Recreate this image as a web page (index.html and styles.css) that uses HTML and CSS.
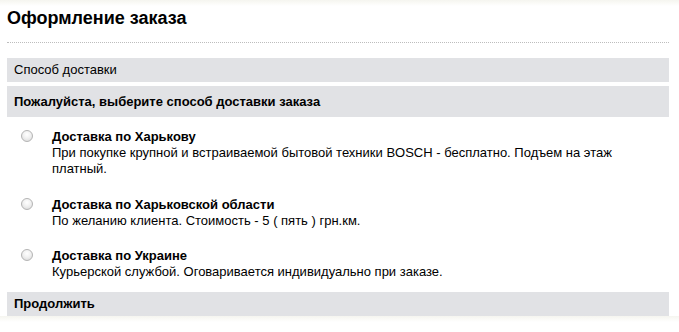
FILE: index.html
```html
<!DOCTYPE html>
<html lang="ru">
<head>
    <meta charset="UTF-8">
    <meta name="viewport" content="width=device-width, initial-scale=1.0">
    <title>Оформление заказа</title>
    <link rel="stylesheet" href="styles.css">
</head>
<body>
    <div class="checkout">
        <h1 class="page-title">Оформление заказа</h1>

        <div class="step-heading">Способ доставки</div>

        <form class="shipping-form">
            <div class="step-bar">Пожалуйста, выберите способ доставки заказа</div>

            <div class="shipping-list">
                <label class="shipping-option">
                    <input type="radio" name="shipping" value="kharkov">
                    <span class="option-text">
                        <span class="option-title">Доставка по Харькову</span>
                        <span class="option-desc">При покупке крупной и встраиваемой бытовой техники BOSCH - бесплатно. Подъем на этаж платный.</span>
                    </span>
                </label>

                <label class="shipping-option">
                    <input type="radio" name="shipping" value="region">
                    <span class="option-text">
                        <span class="option-title">Доставка по Харьковской области</span>
                        <span class="option-desc">По желанию клиента. Стоимость - 5 ( пять ) грн.км.</span>
                    </span>
                </label>

                <label class="shipping-option">
                    <input type="radio" name="shipping" value="ukraine">
                    <span class="option-text">
                        <span class="option-title">Доставка по Украине</span>
                        <span class="option-desc">Курьерской службой. Оговаривается индивидуально при заказе.</span>
                    </span>
                </label>
            </div>

            <div class="step-bar step-bar-small">Продолжить</div>
        </form>
    </div>
</body>
</html>
```

FILE: styles.css
```css
/* General Styles */
body {
    font-family: "Liberation Sans", Arial, sans-serif;
    font-size: 13px;
    color: #000;
    background: linear-gradient(#f5f5ef, #fff 6px);
    margin: 0;
}

.checkout {
    width: 662px;
    padding: 0 7px;
}

.page-title {
    font-size: 18px;
    font-weight: bold;
    margin: 0;
    padding: 8px 0 14px;
    line-height: 20px;
    border-bottom: 1px dotted #bdbdbd;
}

.step-heading,
.step-bar {
    background-color: #e1e2e5;
    padding: 0 7px;
    line-height: 24px;
}

.step-heading {
    margin-top: 15px;
}

.step-bar {
    font-weight: bold;
    margin-top: 4px;
    line-height: 31px;
}

.step-bar-small {
    line-height: 24px;
}

.shipping-form {
    margin: 0;
}

/* Shipping options */
.shipping-list {
    padding: 12px 0 8px;
}

.shipping-option {
    display: flex;
    align-items: flex-start;
    padding-left: 14px;
    margin-bottom: 19px;
    line-height: 16px;
    cursor: pointer;
}

.shipping-option:first-child {
    margin-bottom: 20px;
}

.shipping-option:last-child {
    margin-bottom: 0;
}

.shipping-option input {
    appearance: none;
    -webkit-appearance: none;
    width: 12px;
    height: 12px;
    margin: 1px 19px 0 0;
    border: 1px solid #b4b4b4;
    border-radius: 50%;
    background: radial-gradient(circle at 50% 35%, #fff 0, #f1f1f1 45%, #d6d6d6 100%);
    flex-shrink: 0;
}

.option-text {
    display: flex;
    flex-direction: column;
}

.option-title {
    font-weight: bold;
}

.option-desc {
    max-width: 580px;
}
```
